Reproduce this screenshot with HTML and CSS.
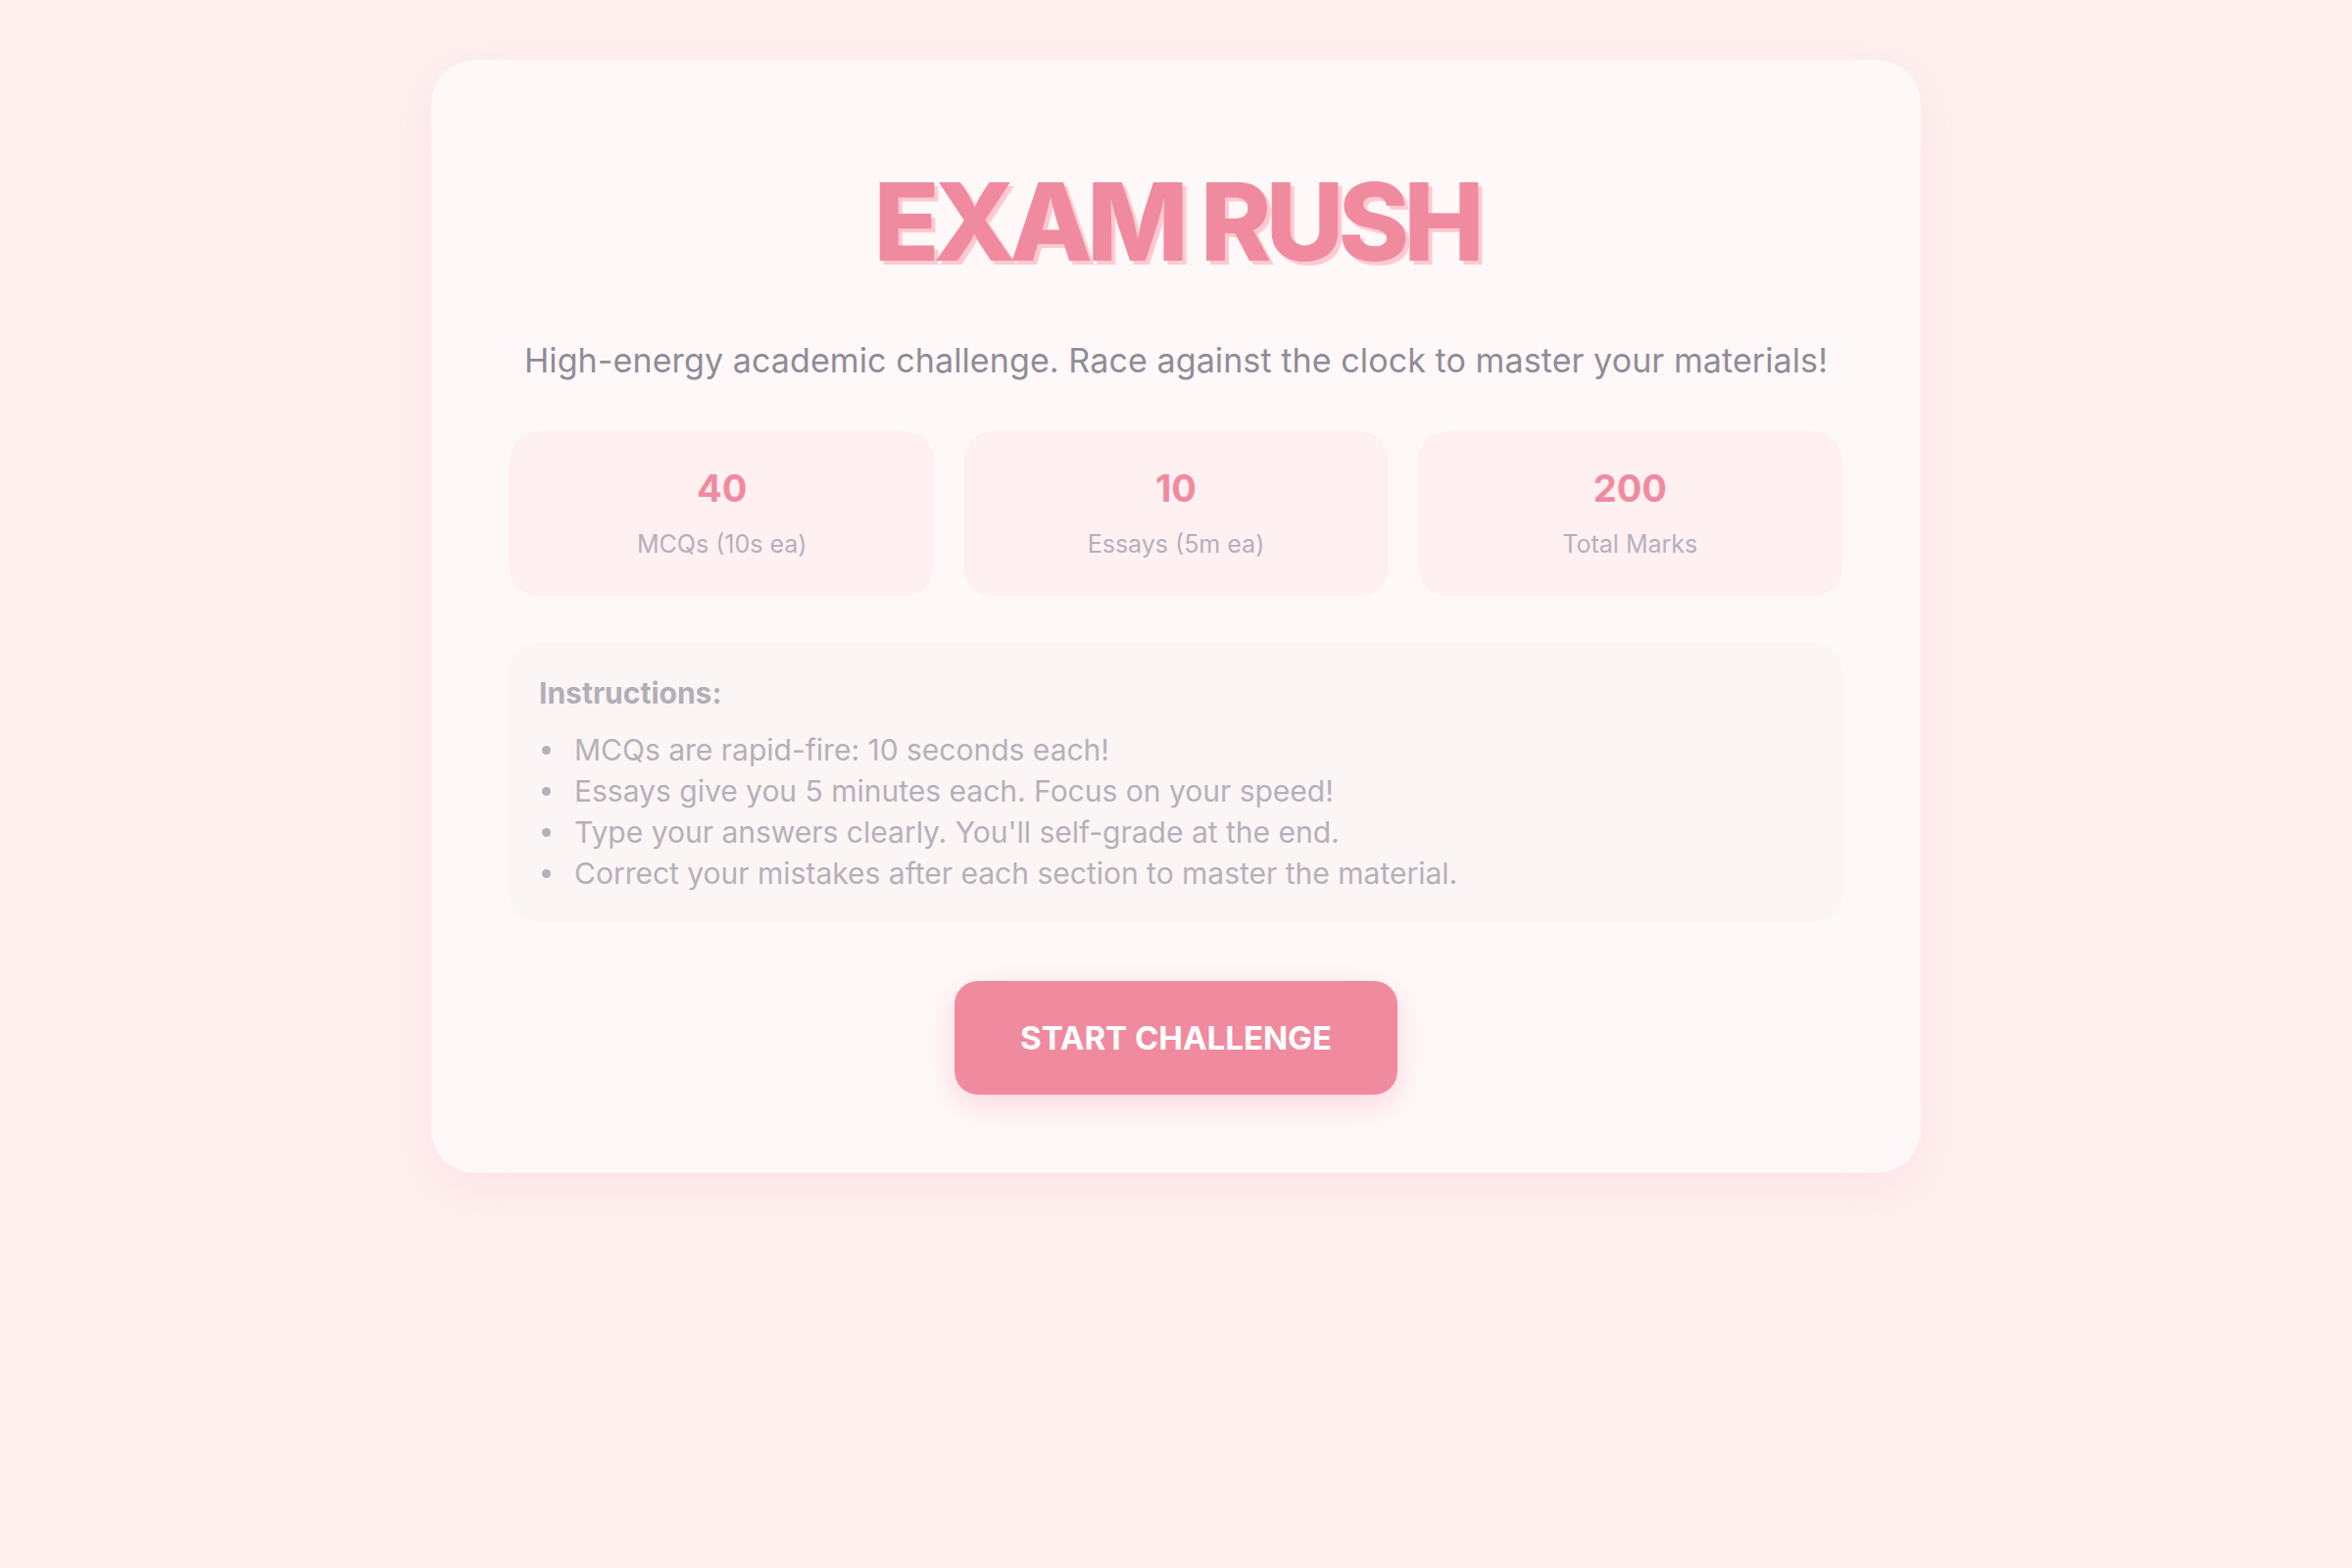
FILE: index.html
```html
<!DOCTYPE html>
<html lang="en">
<head>
<meta charset="utf-8">
<title>Exam Rush</title>
<link rel="stylesheet" href="styles.css">
</head>
<body>
<main class="card">
  <h1 class="title">EXAM RUSH</h1>
  <p class="subtitle">High-energy academic challenge. Race against the clock to master your materials!</p>
  <section class="stats">
    <div class="stat">
      <div class="stat-num">40</div>
      <div class="stat-label">MCQs (10s ea)</div>
    </div>
    <div class="stat">
      <div class="stat-num">10</div>
      <div class="stat-label">Essays (5m ea)</div>
    </div>
    <div class="stat">
      <div class="stat-num">200</div>
      <div class="stat-label">Total Marks</div>
    </div>
  </section>
  <section class="instructions">
    <h2 class="instr-title">Instructions:</h2>
    <ul class="instr-list">
      <li>MCQs are rapid-fire: 10 seconds each!</li>
      <li>Essays give you 5 minutes each. Focus on your speed!</li>
      <li>Type your answers clearly. You'll self-grade at the end.</li>
      <li>Correct your mistakes after each section to master the material.</li>
    </ul>
  </section>
  <div class="actions">
    <button class="start-btn" type="button">START CHALLENGE</button>
  </div>
</main>
</body>
</html>
```

FILE: styles.css
```css
* { box-sizing: border-box; }
html, body { margin: 0; padding: 0; }
body {
  background: #fff0f0;
  font-family: "Inter", "Noto Sans", sans-serif;
  padding-top: 61px;
  min-height: 1600px;
}
.card {
  width: 1520px;
  margin: 0 auto;
  background: #fff8f8;
  border-radius: 45px;
  padding: 80px;
  box-shadow: 0 15px 50px rgba(240, 139, 159, 0.14);
  text-align: center;
}
.title {
  margin: 30px 0 0;
  font-size: 110px;
  line-height: 110px;
  font-weight: 800;
  letter-spacing: -6px;
  color: #f08b9f;
  text-shadow: 4px 4px 0 #ffc9d2;
}
.subtitle {
  margin: 63px 0 0;
  font-size: 34px;
  line-height: 48px;
  letter-spacing: 0.1px;
  color: #8f8c97;
}
.stats {
  margin-top: 48px;
  display: grid;
  grid-template-columns: repeat(3, 1fr);
  gap: 30px;
}
.stat {
  background: #fff0f2;
  border-radius: 30px;
  height: 168px;
  padding-top: 34px;
}
.stat-num {
  font-size: 38px;
  line-height: 48px;
  font-weight: 700;
  color: #f08b9f;
}
.stat-label {
  margin-top: 14px;
  font-size: 25px;
  line-height: 39px;
  color: #b5b0ba;
}
.instructions {
  margin-top: 48px;
  background: #fcf5f5;
  border-radius: 30px;
  padding: 30px;
  text-align: left;
}
.instr-title {
  margin: 0;
  font-size: 30px;
  line-height: 42px;
  font-weight: 700;
  color: #b2aeb7;
}
.instr-list {
  list-style: none;
  margin: 16px 0 0;
  padding: 0 0 0 3px;
  font-size: 30px;
  line-height: 42px;
  color: #b5b0ba;
}
.instr-list li {
  display: flex;
  align-items: center;
}
.instr-list li::before {
  content: "";
  flex: none;
  width: 9px;
  height: 9px;
  border-radius: 50%;
  background: #b5b0ba;
  margin-right: 24px;
}
.actions {
  margin-top: 59px;
  display: flex;
  justify-content: center;
}
.start-btn {
  border: none;
  background: #f08b9f;
  color: #ffffff;
  font-family: "Inter", "Noto Sans", sans-serif;
  font-size: 33px;
  line-height: 42px;
  font-weight: 700;
  padding: 37px 67px;
  border-radius: 24px;
  box-shadow: 0 10px 30px rgba(240, 139, 159, 0.3);
  cursor: pointer;
}
```
